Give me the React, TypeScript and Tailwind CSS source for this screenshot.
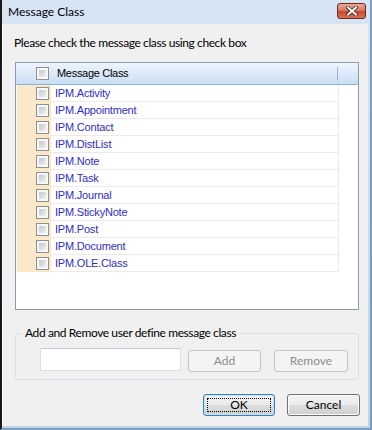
const classes = [
  "IPM.Activity",
  "IPM.Appointment",
  "IPM.Contact",
  "IPM.DistList",
  "IPM.Note",
  "IPM.Task",
  "IPM.Journal",
  "IPM.StickyNote",
  "IPM.Post",
  "IPM.Document",
  "IPM.OLE.Class",
];

const ui = "font-['Lato','Noto_Sans',sans-serif] text-[12px]";
const list = "font-['Liberation_Sans',Arial,sans-serif] text-[11px]";

function Check() {
  return (
    <span className="block h-[13px] w-[13px] shrink-0 border border-[#8e8f8f] bg-[#f7f7f7] p-[2px]">
      <span className="block h-full w-full bg-gradient-to-br from-[#c4c7cc] to-[#eef0f2]" />
    </span>
  );
}

function Btn({
  children,
  w,
  focus,
  disabled,
}: {
  children: string;
  w: string;
  focus?: boolean;
  disabled?: boolean;
}) {
  if (disabled) {
    return (
      <button
        type="button"
        disabled
        className={`${w} h-[22px] rounded-[3px] border border-[#c2c5c8] bg-[#f4f4f4] text-[#8d8d8d] ${ui}`}
      >
        {children}
      </button>
    );
  }
  return (
    <button
      type="button"
      className={`${w} relative h-[22px] rounded-[3px] border bg-[linear-gradient(#f3f3f3,#ebebeb_50%,#dddddd_51%,#cfcfcf)] text-black ${ui} ${
        focus
          ? "border-[#3c7fb1] shadow-[inset_0_0_0_1px_#bfe3f7]"
          : "border-[#707070] shadow-[inset_0_0_0_1px_#fbfbfb]"
      }`}
    >
      {children}
      {focus && (
        <span className="pointer-events-none absolute inset-[3px] border border-dotted border-black" />
      )}
    </button>
  );
}

export default function App() {
  return (
    <div className="flex h-[430px] w-[372px] flex-col overflow-hidden border-b-2 border-l-2 border-r-2 border-b-[#7d9dc0] border-l-[#1a1a1a] border-r-[#7d9dc0] bg-gradient-to-b from-[#d6e4f4] to-[#c0d5ec]">
      {/* Title bar */}
      <div className="flex h-[24px] shrink-0 items-center pl-[6px] pr-[4px]">
        <span className={`${ui} text-black`}>Message Class</span>
        <div className="ml-auto mt-[3px] flex h-[16px] w-[29px] items-center justify-center self-start rounded-[3px] border border-[#6a2a20] bg-[linear-gradient(#eaa998,#d77a63_45%,#c4472d_55%,#d8735a)]">
          <svg width="12" height="10" viewBox="0 0 12 10">
            <path d="M2 1.5 L10 8.5 M10 1.5 L2 8.5" stroke="#4a1c14" strokeWidth="3.6" strokeLinecap="square" />
            <path d="M2 1.5 L10 8.5 M10 1.5 L2 8.5" stroke="#ffffff" strokeWidth="2" strokeLinecap="square" />
          </svg>
        </div>
      </div>

      {/* Client */}
      <div className="mb-[2px] mr-[2px] flex flex-1 flex-col border-l border-l-white bg-[#f0f0f0] pl-[12px] pr-[9px]">
        <p className={`${ui} -ml-[1px] mt-[11px] leading-[16px] tracking-[-0.4px] text-black`}>
          Please check the message class using check box
        </p>

        {/* List */}
        <div className="mt-[11px] h-[248px] border border-[#8f9aa5] bg-white">
          <div className="flex h-[22px] items-center border-b border-[#8db2d8] bg-gradient-to-b from-[#eef5fd] to-[#c9def5] pl-[20px]">
            <Check />
            <span className={`${list} ml-[8px] tracking-[-0.3px] text-black`}>Message Class</span>
            <span className="ml-auto mr-[20px] h-[13px] w-px bg-[#93b3d6]" />
          </div>
          {classes.map((c) => (
            <div key={c} className="flex h-[17px]">
              <div className="ml-[1px] flex w-[34px] items-center bg-[#fbe8c9] pl-[19px]">
                <Check />
              </div>
              <div className="flex w-[288px] items-center border-b border-r border-[#ebebeb] pl-[4px]">
                <span className={`${list} tracking-[-0.2px] text-[#2e2ec4]`}>{c}</span>
              </div>
            </div>
          ))}
        </div>

        {/* Group box */}
        <div className="relative mt-[23px] h-[47px] rounded-[3px] border border-[#d5dfe5]">
          <span className={`${ui} absolute left-[6px] top-[-9px] bg-[#f0f0f0] px-[3px] leading-[16px] tracking-[-0.4px] text-black`}>
            Add and Remove user define message class
          </span>
          <div className="flex items-center pl-[24px] pt-[13px]">
            <input
              className="h-[23px] w-[141px] border border-[#dbdfe6] border-t-[#c5cad1] bg-white outline-none"
              aria-label="Message class"
            />
            <div className="ml-[7px]">
              <Btn w="w-[73px]" disabled>
                Add
              </Btn>
            </div>
            <div className="ml-[13px]">
              <Btn w="w-[74px]" disabled>
                Remove
              </Btn>
            </div>
          </div>
        </div>

        {/* Dialog buttons */}
        <div className="-mr-[1px] mt-[14px] flex justify-end gap-[12px]">
          <Btn w="w-[72px]" focus>
            OK
          </Btn>
          <Btn w="w-[73px]">Cancel</Btn>
        </div>
      </div>
    </div>
  );
}
